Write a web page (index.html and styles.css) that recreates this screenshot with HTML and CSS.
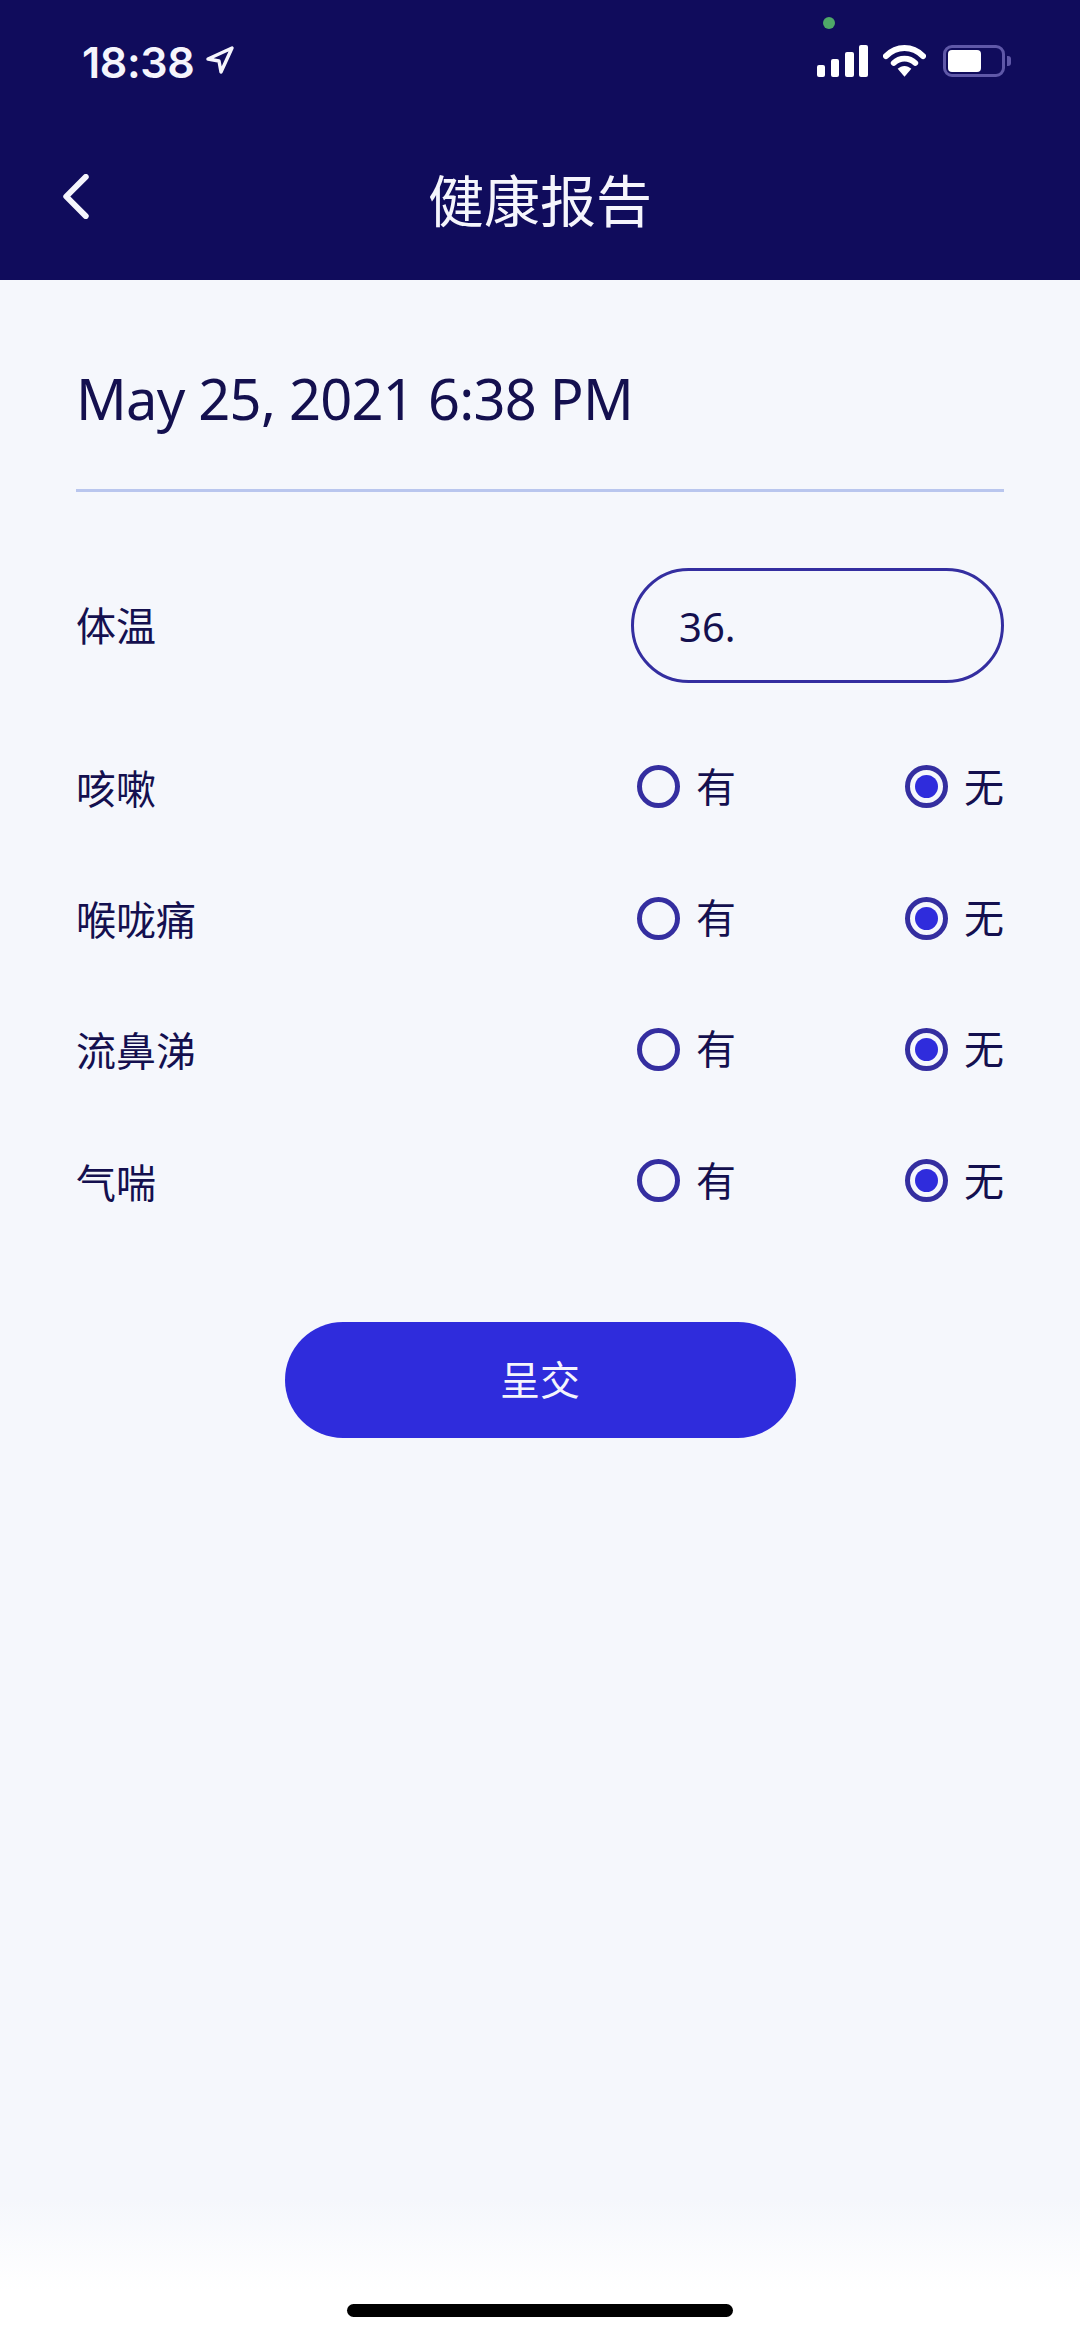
FILE: index.html
```html
<!DOCTYPE html>
<html lang="zh-Hans">
<head>
  <meta charset="UTF-8" />
  <meta name="viewport" content="width=device-width, initial-scale=1.0" />
  <title>健康报告</title>
  <link rel="stylesheet" href="styles.css">
</head>
<body>
  <div class="page">
    <header class="top">
      <div class="status-bar">
        <div class="status-left">
          <span class="time">18:38</span>
          <svg class="icon-location" viewBox="0 0 28 28" width="28" height="28">
            <path d="M2 13 L26 2 L15 26 L13 15 Z" fill="none" stroke="#f5f5fc" stroke-width="3.4" stroke-linejoin="round"/>
          </svg>
        </div>
        <div class="status-right">
          <span class="mic-dot"></span>
          <svg viewBox="0 0 51 32" width="51" height="32">
            <rect x="0" y="20" width="8" height="12" rx="2" fill="#fff"/>
            <rect x="14" y="14" width="8" height="18" rx="2" fill="#fff"/>
            <rect x="28" y="7" width="9" height="25" rx="2" fill="#fff"/>
            <rect x="42" y="0" width="9" height="32" rx="2" fill="#fff"/>
          </svg>
          <svg viewBox="0 0 44 32" width="43" height="32">
            <path d="M3 11 C14 0 30 0 41 11" fill="none" stroke="#fff" stroke-width="6" stroke-linecap="round"/>
            <path d="M11 18 C17 12 27 12 33 18" fill="none" stroke="#fff" stroke-width="6" stroke-linecap="round"/>
            <path d="M15 24 C19 20 25 20 29 24 L22 32 Z" fill="#fff"/>
          </svg>
          <div class="battery">
            <div class="battery-body"><div class="battery-level"></div></div>
            <div class="battery-cap"></div>
          </div>
        </div>
      </div>
      <nav class="nav">
        <svg class="back" viewBox="0 0 26 46" width="26" height="45">
          <path d="M23 3 L3 23 L23 43" fill="none" stroke="#f5f5fc" stroke-width="6" stroke-linecap="round" stroke-linejoin="round"/>
        </svg>
        <h1>健康报告</h1>
      </nav>
    </header>

    <main class="content">
      <div class="date">May 25, 2021 6:38 PM</div>

      <div class="row row-temp">
        <span class="label">体温</span>
        <input class="temp" type="text" value="36.">
      </div>

      <div class="row">
        <span class="label">咳嗽</span>
        <div class="choices">
          <span class="choice"><i class="radio"></i>有</span>
          <span class="choice"><i class="radio on"></i>无</span>
        </div>
      </div>
      <div class="row">
        <span class="label">喉咙痛</span>
        <div class="choices">
          <span class="choice"><i class="radio"></i>有</span>
          <span class="choice"><i class="radio on"></i>无</span>
        </div>
      </div>
      <div class="row">
        <span class="label">流鼻涕</span>
        <div class="choices">
          <span class="choice"><i class="radio"></i>有</span>
          <span class="choice"><i class="radio on"></i>无</span>
        </div>
      </div>
      <div class="row">
        <span class="label">气喘</span>
        <div class="choices">
          <span class="choice"><i class="radio"></i>有</span>
          <span class="choice"><i class="radio on"></i>无</span>
        </div>
      </div>

      <button class="submit">呈交</button>
    </main>

    <div class="home-bar"><span></span></div>
  </div>
</body>
</html>
```

FILE: styles.css
```css
* { box-sizing: border-box; }
html, body { margin: 0; padding: 0; }
body {
  font-family: "Noto Sans", "Noto Sans CJK SC", sans-serif;
  color: #14104f;
}
.page {
  width: 1080px;
  height: 2337px;
  display: flex;
  flex-direction: column;
  background: linear-gradient(to bottom, #f5f7fc 0, #f5f7fc 2200px, #fff 2290px);
}

/* header */
.top { background: #100c5c; height: 280px; color: #fff; }
.status-bar {
  position: relative;
  height: 120px;
  padding: 41px 69px 0 82px;
  display: flex;
  justify-content: space-between;
  align-items: flex-start;
}
.status-left { display: flex; align-items: center; gap: 12px; }
.time {
  font-family: Inter, sans-serif;
  font-size: 43px;
  line-height: 42px;
  font-weight: 600;
  letter-spacing: -0.4px;
  color: #f5f5fc;
}
.icon-location { margin-top: -5px; }
.status-right { display: flex; align-items: flex-start; gap: 15px; padding-top: 4px; }
.mic-dot {
  position: absolute;
  left: 823px;
  top: 17px;
  width: 12px;
  height: 12px;
  border-radius: 50%;
  background: #4fa868;
}
.battery { display: flex; align-items: center; gap: 2px; margin-left: 2px; }
.battery-body {
  width: 62px;
  height: 32px;
  border: 3px solid #5f58a8;
  border-radius: 9px;
  padding: 2px;
}
.battery-level { width: 33px; height: 100%; background: #fff; border-radius: 4px; }
.battery-cap { width: 4px; height: 10px; background: #5f58a8; border-radius: 0 3px 3px 0; }

.nav {
  position: relative;
  height: 160px;
  display: flex;
  justify-content: center;
  align-items: flex-start;
}
.nav h1 {
  margin: 0;
  padding-top: 44px;
  font-size: 56px;
  line-height: 72px;
  font-weight: 400;
  color: #f5f5fc;
}
.back { position: absolute; left: 63px; top: 54px; }

/* form */
.content { flex: 1; padding: 0 76px; }
.date {
  height: 212px;
  padding-top: 78px;
  font-size: 56px;
  line-height: 80px;
  letter-spacing: -0.75px;
  border-bottom: 3px solid #b9c6ee;
}
.row {
  height: 131.4px;
  display: flex;
  align-items: center;
  justify-content: space-between;
  font-size: 40px;
  color: #14104f;
}
.row-temp { height: 115px; margin-top: 76px; margin-bottom: 38px; }
.row-temp .label { margin-bottom: 4px; }
.temp {
  width: 373px;
  height: 115px;
  padding: 2px 45px 0;
  border: 3px solid #342ea0;
  border-radius: 58px;
  background: transparent;
  font: inherit;
  color: inherit;
  outline: none;
}
.choices { width: 367px; display: flex; justify-content: space-between; }
.choice { display: flex; align-items: center; gap: 16px; line-height: 50px; }
.radio {
  width: 43px;
  height: 43px;
  border: 5px solid #342ea0;
  border-radius: 50%;
  display: block;
}
.radio.on { position: relative; }
.radio.on::after {
  content: "";
  position: absolute;
  left: 5px;
  top: 5px;
  width: 23px;
  height: 23px;
  border-radius: 50%;
  background: #2f2cdc;
}
.submit {
  display: block;
  width: 511px;
  height: 116px;
  margin: 75px auto 0;
  padding: 0 0 3px;
  border: none;
  border-radius: 58px;
  background: #2f2cdc;
  color: #f5f5fc;
  font-family: inherit;
  font-size: 40px;
}

.home-bar { height: 33px; display: flex; justify-content: center; }
.home-bar span { width: 386px; height: 13px; background: #000; border-radius: 7px; }
```
